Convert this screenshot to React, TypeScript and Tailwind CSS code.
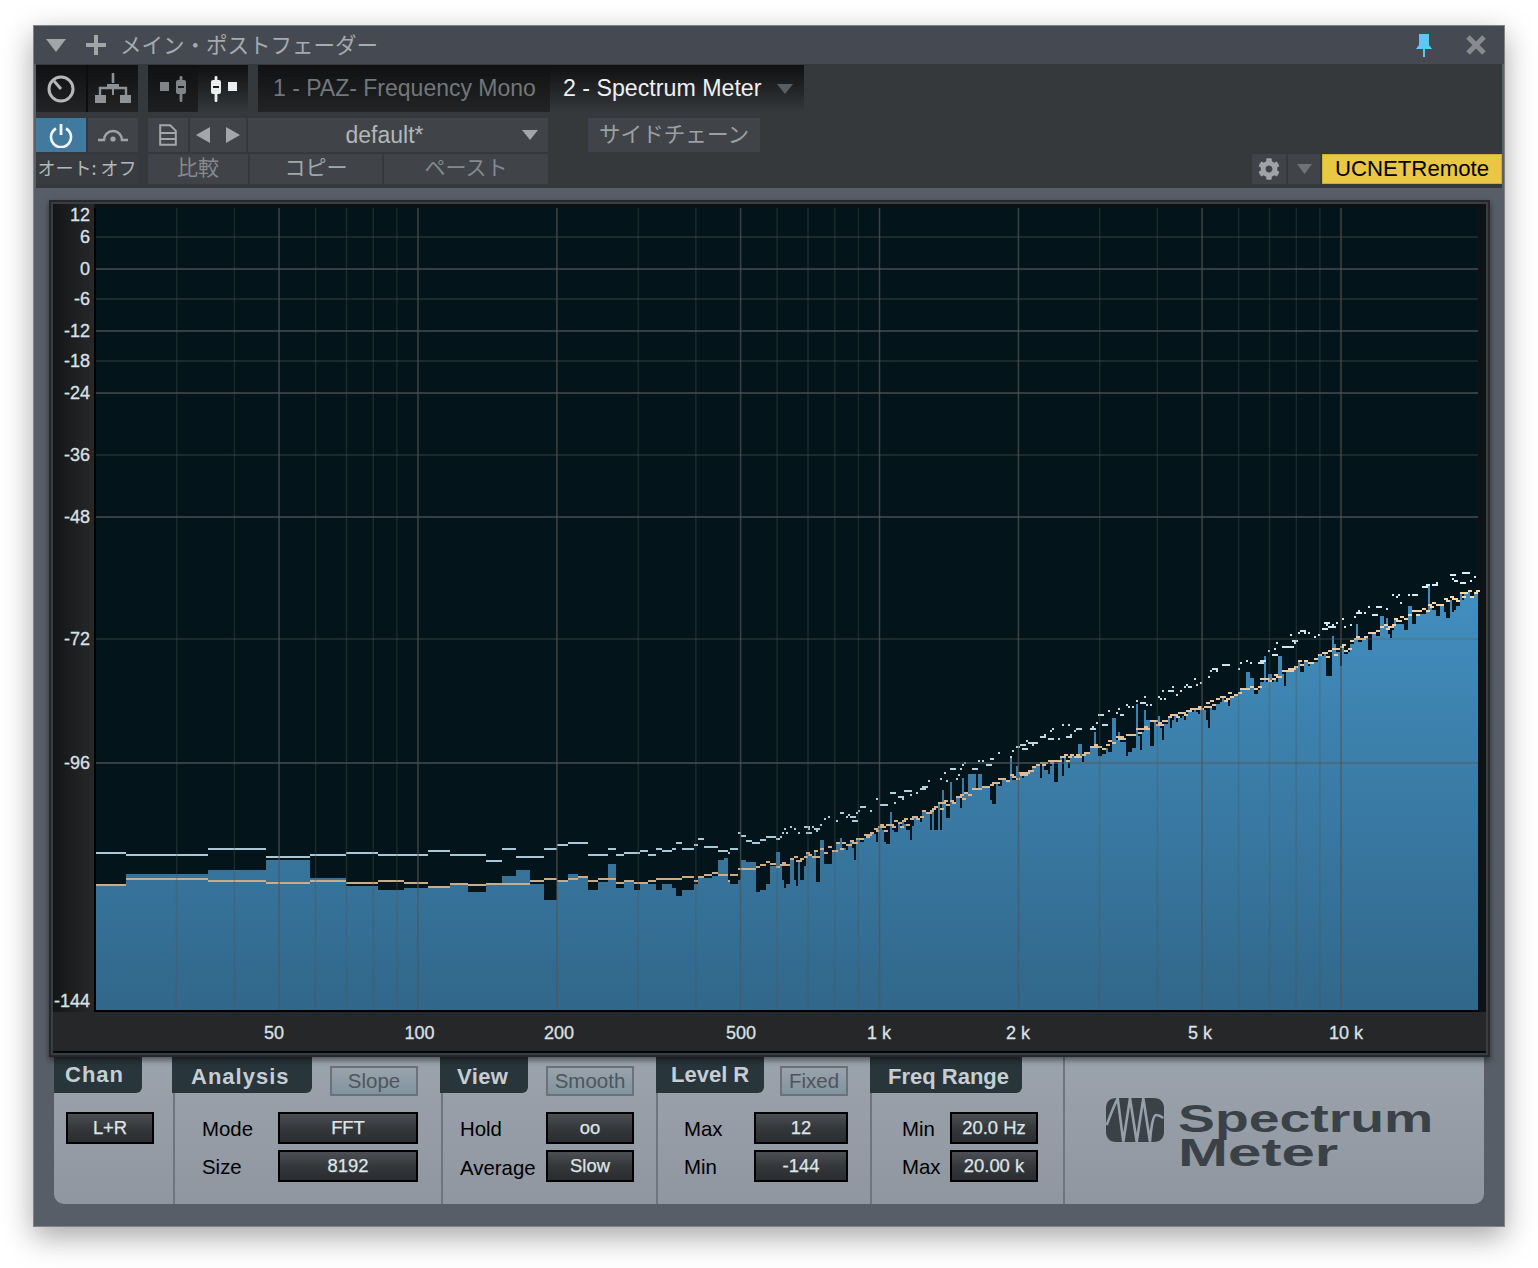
import React from "react";
import { FaCog } from "react-icons/fa";

// ---------- spectrum data ----------
const low: number[][] = [
  [126, 884, 884, 852], [208, 874, 878, 854], [266, 870, 880, 848], [310, 860, 882, 856], [346, 878, 880, 854],
  [378, 886, 882, 852], [404, 890, 880, 854], [428, 888, 882, 854], [450, 886, 886, 850], [468, 884, 883, 854],
  [486, 892, 884, 854], [502, 884, 883, 860], [516, 876, 883, 848], [530, 870, 883, 856], [544, 884, 880, 856],
  [557, 900, 878, 848], [568, 882, 880, 844], [578, 874, 878, 842], [588, 876, 876, 842], [598, 890, 880, 854],
  [608, 882, 878, 854], [616, 864, 878, 848], [624, 888, 882, 854], [634, 882, 880, 852], [640, 890, 882, 852],
  [648, 884, 882, 850], [656, 884, 880, 854], [662, 890, 878, 848], [672, 884, 878, 850], [676, 888, 878, 848],
  [682, 896, 878, 842], [694, 890, 876, 848], [698, 884, 880, 844], [704, 878, 876, 838], [712, 878, 874, 846],
  [718, 876, 872, 846], [724, 860, 874, 850], [728, 858, 874, 850], [730, 881, 880, 852], [738, 884, 874, 848],
  [741, 880, 868, 832], [746, 860, 868, 835], [752, 862, 868, 840], [756, 862, 868, 842], [760, 892, 866, 842],
  [766, 890, 864, 839], [770, 884, 861, 836], [776, 866, 863, 836], [780, 852, 866, 838],
];
const ctrl: number[][] = [
  [780, 862], [800, 857], [850, 842], [880, 827], [900, 823], [950, 801], [1000, 780], [1018, 775], [1050, 762],
  [1100, 746], [1150, 724], [1200, 706], [1250, 686], [1300, 662], [1340, 648], [1400, 619], [1440, 602], [1478, 589],
];
const interp = (x: number) => {
  for (let i = 1; i < ctrl.length; i++) {
    if (x <= ctrl[i][0]) {
      const [a, b] = ctrl[i - 1];
      const [c, d] = ctrl[i];
      return b + ((d - b) * (x - a)) / (c - a);
    }
  }
  return 589;
};
let seed = 987;
const rnd = () => {
  seed = (seed * 1664525 + 1013904223) % 4294967296;
  return seed / 4294967296;
};
const even = (v: number) => Math.round(v / 2) * 2;

function build() {
  let blue = "M96 1010";
  let orange = "";
  let white = "";
  let prev = 96;
  for (const [x, b, o, w] of low) {
    blue += `V${b}H${x}`;
    orange += `M${prev} ${o}H${x}V${o + 2}H${prev}Z`;
    white += `M${prev} ${w}H${x}V${w + 2}H${prev}Z`;
    prev = x;
  }
  let x = 780;
  while (x < 1478) {
    const w = Math.min(rnd() < 0.3 ? 4 : 2, 1478 - x);
    const base = interp(x);
    const o = even(base + (rnd() - 0.5) * 7);
    const r = rnd();
    let b = o + rnd() * 7 - 1;
    if (r < 0.13) b = o - 5 - rnd() * 20;
    else if (r < 0.38) b = o + 6 + rnd() * 20;
    blue += `V${even(b)}H${x + w}`;
    const ow = Math.max(w, 4);
    orange += `M${x} ${o}h${ow}v2h${-ow}Z`;
    if (rnd() < 0.78) {
      const off = x > 1340 ? 25 - ((x - 1340) / 138) * 7 : 27;
      const wy = even(base - off + (rnd() - 0.5) * 13);
      const ww = rnd() < 0.22 ? 6 : 2;
      white += `M${x} ${wy}h${ww}v2h${-ww}Z`;
    }
    x += w;
  }
  blue += "V1010Z";
  return { blue, orange, white };
}
const spec = build();

const fx = (f: number) => 418 + 461.5 * Math.log10(f / 100);
const majorF = [50, 100, 200, 500, 1000, 2000, 5000, 10000];
const minorF = [30, 40, 60, 70, 80, 90, 300, 400, 600, 700, 800, 900, 3000, 4000, 6000, 7000, 8000, 9000];
const dbY: [string, number, boolean][] = [
  ["6", 237, false], ["0", 269, true], ["-6", 299, false], ["-12", 331, true], ["-18", 361, false],
  ["-24", 393, true], ["-36", 455, false], ["-48", 517, true], ["-72", 639, false], ["-96", 763, true],
];
const dbLabels: [string, number][] = [
  ["12", 221], ["6", 243], ["0", 275], ["-6", 305], ["-12", 337], ["-18", 367], ["-24", 399], ["-36", 461],
  ["-48", 523], ["-72", 645], ["-96", 769], ["-144", 1007],
];
const fLabels: [string, number][] = [
  ["50", 274], ["100", 419.5], ["200", 559], ["500", 741], ["1 k", 879], ["2 k", 1018], ["5 k", 1200], ["10 k", 1346],
];

function Chart() {
  return (
    <svg width={1433} height={849} viewBox="53 204 1433 849" className="block">
      <defs>
        <linearGradient id="fillB" gradientUnits="userSpaceOnUse" x1="0" y1="560" x2="0" y2="1010">
          <stop offset="0" stopColor="#4391c3" />
          <stop offset="1" stopColor="#31678a" />
        </linearGradient>
        <linearGradient id="lineO" gradientUnits="userSpaceOnUse" x1="0" y1="590" x2="0" y2="880">
          <stop offset="0" stopColor="#f8d8ae" />
          <stop offset="1" stopColor="#cbac89" />
        </linearGradient>
        <linearGradient id="lineW" gradientUnits="userSpaceOnUse" x1="0" y1="570" x2="0" y2="850">
          <stop offset="0" stopColor="#dbf1fb" />
          <stop offset="1" stopColor="#a8c8d6" />
        </linearGradient>
        <linearGradient id="strip" gradientUnits="userSpaceOnUse" x1="53" y1="204" x2="94" y2="204">
          <stop offset="0" stopColor="#141517" />
          <stop offset="1" stopColor="#27282a" />
        </linearGradient>
      </defs>
      <rect x="53" y="204" width="1433" height="849" fill="#0d1214" />
      <rect x="53" y="204" width="41" height="808" fill="url(#strip)" />
      <rect x="53" y="1012" width="1433" height="39" fill="#262729" />
      <rect x="53" y="1051" width="1433" height="2" fill="#05090b" />
      <rect x="94" y="208" width="2" height="804" fill="#000" />
      <rect x="94" y="1010" width="1386" height="2" fill="#000" />
      <rect x="96" y="208" width="1382" height="802" fill="#03141a" />
      <path d={spec.blue} fill="url(#fillB)" shapeRendering="crispEdges" />
      <path d={spec.white} fill="url(#lineW)" shapeRendering="crispEdges" />
      <path d={spec.orange} fill="url(#lineO)" shapeRendering="crispEdges" />
      {dbY.map(([k, y, major]) => (
        <rect key={k} x="96" y={y - 0.75} width="1382" height="1.5" fill="#5c5f5f" opacity={major ? 0.75 : 0.38} />
      ))}
      {minorF.map((f) => (
        <rect key={f} x={fx(f) - 0.75} y="208" width="1.5" height="802" fill="#555" opacity="0.32" />
      ))}
      {majorF.map((f) => (
        <rect key={f} x={fx(f) - 0.75} y="208" width="1.5" height="802" fill="#555" opacity="0.72" />
      ))}
      {dbLabels.map(([t, y]) => (
        <text key={t} x="90" y={y} textAnchor="end" fontSize="18" fill="#d9e1e7" stroke="#d9e1e7" strokeWidth="0.3">
          {t}
        </text>
      ))}
      {fLabels.map(([t, x]) => (
        <text key={t} x={x} y="1039" textAnchor="middle" fontSize="18" fill="#d9e1e7" stroke="#d9e1e7" strokeWidth="0.3">
          {t}
        </text>
      ))}
    </svg>
  );
}

// ---------- small parts ----------
function Tri({ w = 20, h = 13, c = "#9a9ea1" }: { w?: number; h?: number; c?: string }) {
  return (
    <svg width={w} height={h} viewBox="0 0 20 13" className="block shrink-0" preserveAspectRatio="none">
      <polygon points="0,0 20,0 10,13" fill={c} />
    </svg>
  );
}

function FaderIcon({ c, sq, flip }: { c: string; sq: string; flip?: boolean }) {
  const fader = (
    <svg width="12" height="26" viewBox="0 0 12 26" className="block">
      <rect x="4.6" y="0" width="2.8" height="26" rx="1.2" fill={c} />
      <rect x="1" y="4" width="10" height="14" rx="2" fill={c} />
      <rect x="3" y="10" width="6" height="2" fill="#1a1c1e" />
    </svg>
  );
  const square = <div className="w-[9px] h-[9px] mt-[-4px]" style={{ background: sq }} />;
  return (
    <div className="flex items-center gap-[6px]">
      {flip ? fader : square}
      {flip ? square : fader}
    </div>
  );
}

function Cell({ className = "", children }: { className?: string; children?: React.ReactNode }) {
  return <div className={`flex items-center justify-center bg-[#404449] ${className}`}>{children}</div>;
}

function DarkBtn({ w, children }: { w: string; children: React.ReactNode }) {
  return (
    <div
      className={`${w} h-[32px] border-2 border-black bg-linear-to-b from-[#4c5054] via-[#34383b] to-[#2a2d30] flex items-center justify-center text-[18.4px] leading-none text-[#dfe4e8] [-webkit-text-stroke:0.25px_#dfe4e8]`}
    >
      {children}
    </div>
  );
}

function Toggle({ w, children }: { w: string; children: React.ReactNode }) {
  return (
    <div
      className={`${w} h-[30px] mt-[9px] border-2 border-[#6c7279] bg-linear-to-b from-[#9aa3ac] to-[#80949f] flex items-center justify-center text-[20.5px] leading-none text-[#50555b]`}
    >
      {children}
    </div>
  );
}

function Tab({ w, children }: { w: string; children: React.ReactNode }) {
  return (
    <div
      className={`${w} h-[36px] shrink-0 rounded-br-[6px] bg-[#28353b] flex items-center text-[22px] leading-none font-bold text-[#c6cdd3]`}
    >
      {children}
    </div>
  );
}

function Row({ label, low, children }: { label?: string; low?: boolean; children: React.ReactNode }) {
  return (
    <div className="flex items-center justify-between h-[32px]">
      <span className={`text-[20.4px] leading-none text-black ${low ? "pt-[5px]" : "pt-[3px]"}`}>{label}</span>
      {children}
    </div>
  );
}

export default function App() {
  return (
    <div className="min-h-screen bg-white pt-[25px] pl-[33px] font-['Liberation_Sans','Noto_Sans_CJK_JP',sans-serif]">
      <div className="w-[1472px] h-[1202px] border border-[#808488] bg-[#5a6068] px-[2px] flex flex-col shadow-[0_10px_28px_rgba(0,0,0,0.35)]">
        {/* title bar */}
        <div className="h-[38px] shrink-0 bg-[#454a52] flex items-center -mx-[2px] pl-[12px]">
          <Tri w={20} h={13} c="#a2a6a9" />
          <svg width="22" height="22" viewBox="0 0 22 22" className="block ml-[19px]">
            <path d="M11 1v20M1 11h20" stroke="#a2a6a9" strokeWidth="4" />
          </svg>
          <span className="ml-[13px] pb-[3px] text-[21.5px] leading-none text-[#a7abae] font-['Noto_Sans_CJK_JP',sans-serif]">
            メイン・ポストフェーダー
          </span>
          <svg width="18" height="24" viewBox="0 0 18 24" className="block ml-auto mr-[32px]">
            <path d="M4 1h10v11l3 4H1l3-4z M8 16h2v8H8z" fill="#5cc8f5" />
          </svg>
          <svg width="22" height="22" viewBox="0 0 22 22" className="block mr-[17px]">
            <path d="M3 3l16 16M19 3L3 19" stroke="#878b8f" strokeWidth="5" />
          </svg>
        </div>

        {/* toolbar */}
        <div className="h-[124px] shrink-0 bg-[#35393c] flex flex-col pt-[1px]">
          <div className="flex h-[47px]">
            <div className="flex gap-[2px] bg-[#0c0d0e]">
              <div className="w-[50px] flex items-center justify-center bg-linear-to-b from-[#101112] to-[#212325]">
                <svg width="30" height="30" viewBox="0 0 30 30" className="block">
                  <circle cx="15" cy="15" r="12" fill="none" stroke="#b5b7b9" strokeWidth="3" />
                  <path d="M15 15L8 7" stroke="#b5b7b9" strokeWidth="3" />
                </svg>
              </div>
              <div className="w-[50px] flex items-center justify-center bg-linear-to-b from-[#101112] to-[#212325]">
                <svg width="38" height="34" viewBox="0 0 38 34" className="block">
                  <path d="M19 1v10" stroke="#8f9295" strokeWidth="2.6" />
                  <path d="M13 12h12v4H13z" fill="#8f9295" />
                  <path d="M6 23v-7h26v7" fill="none" stroke="#8f9295" strokeWidth="2.4" />
                  <path d="M19 16v7" stroke="#8f9295" strokeWidth="2" />
                  <rect x="1" y="23" width="11" height="8" fill="#8f9295" />
                  <rect x="26" y="23" width="11" height="8" fill="#8f9295" />
                </svg>
              </div>
            </div>
            <div className="flex ml-[10px]">
              <div className="w-[50px] flex items-center justify-center bg-linear-to-b from-[#101112] to-[#1d1f21]">
                <FaderIcon c="#808487" sq="#808487" />
              </div>
              <div className="w-[50px] flex items-center justify-center bg-linear-to-b from-[#0f1011] to-[#35393c]">
                <FaderIcon c="#eceded" sq="#eceded" flip />
              </div>
            </div>
            <div className="w-[292px] ml-[10px] bg-linear-to-b from-[#101112] to-[#222426] flex items-center pl-[15px] text-[23px] leading-none text-[#73777a]">
              1 - PAZ- Frequency Mono
            </div>
            <div className="w-[254px] bg-linear-to-b from-[#0f1011] to-[#35393c] flex items-center pl-[13px] text-[23.2px] leading-none text-[#eef1f3]">
              2 - Spectrum Meter
              <span className="ml-[16px]">
                <Tri w={16} h={10} c="#5a5e61" />
              </span>
            </div>
          </div>

          <div className="flex h-[34px] mt-[6px] gap-[2px]">
            <div className="w-[50px] bg-[#427a9f] flex items-center justify-center">
              <svg width="24" height="26" viewBox="0 0 24 26" className="block">
                <path d="M7 6.5a10 10 0 1 0 10 0" fill="none" stroke="#f2f5f7" strokeWidth="2.6" />
                <path d="M12 2v11" stroke="#f2f5f7" strokeWidth="2.8" />
              </svg>
            </div>
            <Cell className="w-[50px] mr-[8px]">
              <svg width="32" height="16" viewBox="0 0 32 16" className="block">
                <path d="M1 13h6a9 9 0 0 1 18 0h6" fill="none" stroke="#a2a5a8" strokeWidth="2.4" />
                <circle cx="16" cy="12" r="2.6" fill="#a2a5a8" />
              </svg>
            </Cell>
            <Cell className="w-[40px]">
              <svg width="18" height="22" viewBox="0 0 18 22" className="block">
                <path d="M1.2 1.2h10l5.6 5.6v14H1.2z" fill="none" stroke="#a4a7aa" strokeWidth="2" />
                <path d="M1 9h16M1 15h16" stroke="#a4a7aa" strokeWidth="2" />
              </svg>
            </Cell>
            <Cell className="w-[56px] gap-[16px]">
              <svg width="14" height="16" viewBox="0 0 14 16" className="block">
                <polygon points="14,0 14,16 0,8" fill="#a4a7aa" />
              </svg>
              <svg width="14" height="16" viewBox="0 0 14 16" className="block">
                <polygon points="0,0 0,16 14,8" fill="#a4a7aa" />
              </svg>
            </Cell>
            <Cell className="w-[300px] relative text-[23px] leading-none text-[#b3b7b9]">
              <span className="mr-[27px]">default*</span>
              <span className="absolute right-[10px] top-[12px]">
                <Tri w={16} h={10} c="#a2a6a9" />
              </span>
            </Cell>
            <Cell className="w-[172px] ml-[38px] pb-[4px] text-[21.6px] leading-none text-[#9da0a3] font-['Noto_Sans_CJK_JP',sans-serif]">
              サイドチェーン
            </Cell>
          </div>

          <div className="flex h-[30px] mt-[2px] gap-[2px] text-[21px] leading-none font-['Noto_Sans_CJK_JP',sans-serif]">
            <div className="w-[102px] mr-[8px] pb-[5px] bg-[#383c40] flex items-center justify-center text-[18px] text-[#b4b7b9] whitespace-nowrap">
              オート: オフ
            </div>
            <Cell className="w-[100px] pb-[5px] text-[#868a8d]">比較</Cell>
            <Cell className="w-[132px] pb-[5px] text-[#a4a7aa]">コピー</Cell>
            <Cell className="w-[164px] pb-[5px] text-[#85898c]">ペースト</Cell>
            <Cell className="w-[34px] ml-auto">
              <FaCog size={22} color="#a0a3a6" />
            </Cell>
            <Cell className="w-[32px]">
              <Tri w={15} h={10} c="#6f7376" />
            </Cell>
            <div className="w-[180px] bg-[#e9c743] border border-[#cfae38] flex items-center justify-center text-[22.2px] text-black font-['Liberation_Sans',sans-serif]">
              UCNETRemote
            </div>
          </div>
        </div>

        {/* content */}
        <div className="flex-1 bg-[#585e68] -mx-[2px] pt-[12px]">
          <div className="relative z-10 ml-[15px] w-[1441px] border-2 border-[#25272a] shadow-[0_3px_6px_rgba(0,0,0,0.5)]">
            <div className="border-2 border-[#3b3e41]">
              <Chart />
            </div>
          </div>

          <div className="ml-[20px] w-[1430px] h-[147px] rounded-b-[10px] bg-linear-to-b from-[#9ba3ad] to-[#8f969f] flex overflow-hidden">
            {/* Chan */}
            <div className="w-[119px] shrink-0">
              <div className="h-[37px]">
                <Tab w="w-[88px] pl-[11px] tracking-[1px]">Chan</Tab>
              </div>
              <div className="pt-[18px] pl-[12px]">
                <DarkBtn w="w-[88px]">L+R</DarkBtn>
              </div>
            </div>
            {/* Analysis */}
            <div className="w-[268px] shrink-0 border-l-2 border-[#6f757c]">
              <div className="h-[37px] flex justify-between pr-[23px] -ml-[3px]">
                <Tab w="w-[140px] pl-[19px] pt-[4px] tracking-[1px]">Analysis</Tab>
                <Toggle w="w-[88px]">Slope</Toggle>
              </div>
              <div className="pt-[18px] pl-[27px] pr-[23px] flex flex-col gap-[6px]">
                <Row label="Mode">
                  <DarkBtn w="w-[140px]">FFT</DarkBtn>
                </Row>
                <Row label="Size">
                  <DarkBtn w="w-[140px]">8192</DarkBtn>
                </Row>
              </div>
            </div>
            {/* View */}
            <div className="w-[215px] shrink-0 border-l-2 border-[#6f757c]">
              <div className="h-[37px] flex justify-between pr-[22px] -ml-[3px]">
                <Tab w="w-[88px] pl-[17px] pt-[4px] tracking-[0.4px]">View</Tab>
                <Toggle w="w-[88px]">Smooth</Toggle>
              </div>
              <div className="pt-[18px] pl-[17px] pr-[22px] flex flex-col gap-[6px]">
                <Row label="Hold">
                  <DarkBtn w="w-[88px]">oo</DarkBtn>
                </Row>
                <Row label="Average" low>
                  <DarkBtn w="w-[88px]">Slow</DarkBtn>
                </Row>
              </div>
            </div>
            {/* Level R */}
            <div className="w-[214px] shrink-0 border-l-2 border-[#6f757c]">
              <div className="h-[37px] flex justify-between pr-[22px] -ml-[2px]">
                <Tab w="w-[108px] pl-[15px]">Level R</Tab>
                <Toggle w="w-[68px]">Fixed</Toggle>
              </div>
              <div className="pt-[18px] pl-[26px] pr-[22px] flex flex-col gap-[6px]">
                <Row label="Max">
                  <DarkBtn w="w-[94px]">12</DarkBtn>
                </Row>
                <Row label="Min">
                  <DarkBtn w="w-[94px]">-144</DarkBtn>
                </Row>
              </div>
            </div>
            {/* Freq Range */}
            <div className="w-[193px] shrink-0 border-l-2 border-[#6f757c]">
              <div className="h-[37px] flex -ml-[2px]">
                <Tab w="w-[152px] pl-[18px] pt-[4px]">Freq Range</Tab>
              </div>
              <div className="pt-[18px] pl-[30px] pr-[25px] flex flex-col gap-[6px]">
                <Row label="Min">
                  <DarkBtn w="w-[88px]">20.0 Hz</DarkBtn>
                </Row>
                <Row label="Max">
                  <DarkBtn w="w-[88px]">20.00 k</DarkBtn>
                </Row>
              </div>
            </div>
            {/* Logo */}
            <div className="flex-1 border-l-2 border-[#6f757c] pl-[41px] pt-[41px] flex items-start">
              <svg width="58" height="44" viewBox="0 0 58 44" className="block shrink-0">
                <path
                  d="M10 0H48C54 0 58 4 58 10V34C58 40 54 44 48 44H10C4 44 0 40 0 34V10C0 4 4 0 10 0Z"
                  fill="#3a4247"
                />
                <path
                  d="M0.7 27C4 18 8 8 11.7 0.3L17.3 43.7L24 0.3L30.7 43.7L37.3 0.3L44 43.7C45 30 47 17 50 17C53 17 55 18 57.3 20"
                  fill="none"
                  stroke="#96a0aa"
                  strokeWidth="2.6"
                />
              </svg>
              <div className="ml-[14px] mt-[4px] font-bold text-[38px] leading-[34px] text-[#3a4247] whitespace-nowrap">
                <div className="origin-left scale-x-[1.456]">Spectrum</div>
                <div className="origin-left scale-x-[1.58]">Meter</div>
              </div>
            </div>
          </div>
        </div>
      </div>
    </div>
  );
}
